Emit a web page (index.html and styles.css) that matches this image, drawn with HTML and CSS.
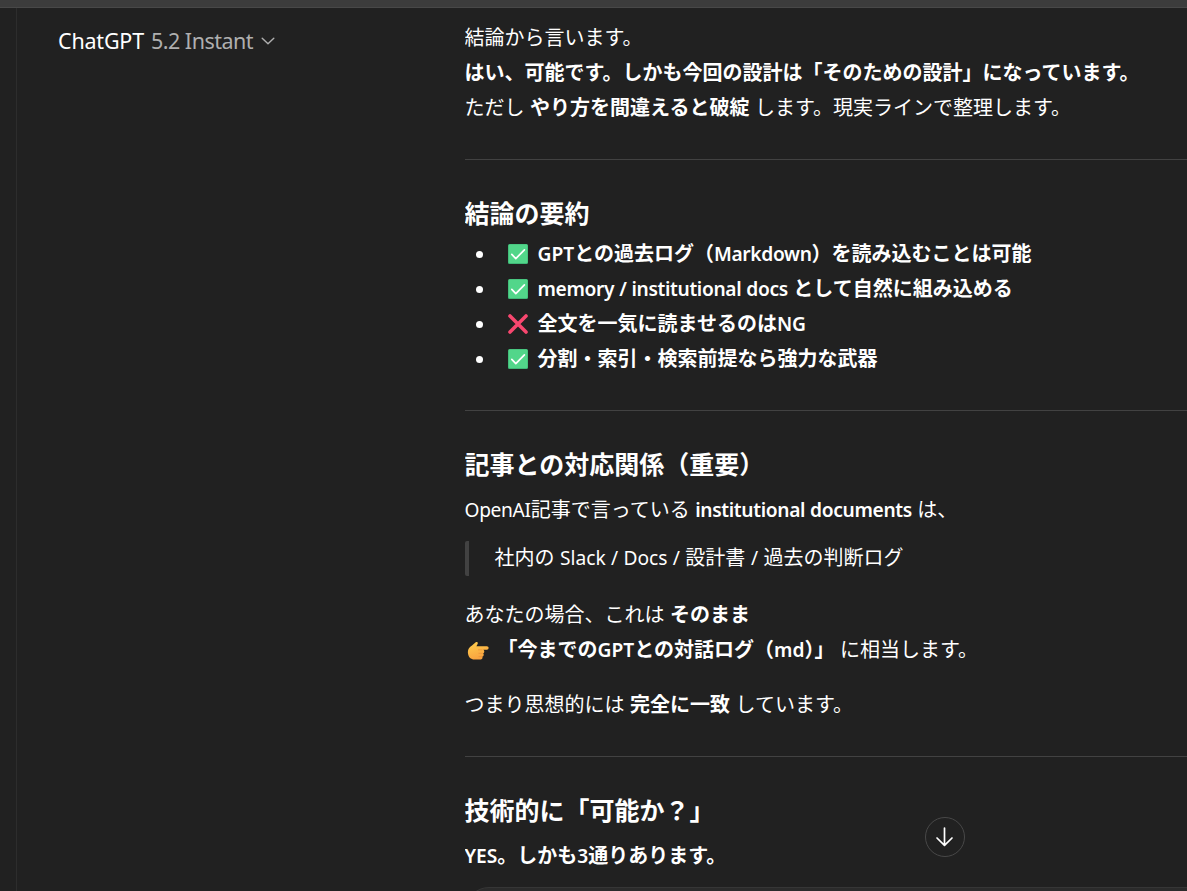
FILE: index.html
```
<!DOCTYPE html>
<html lang="ja">
<head>
    <meta charset="UTF-8">
    <meta name="viewport" content="width=device-width, initial-scale=1.0">
    <title>ChatGPT</title>
    <link rel="stylesheet" href="styles.css">
</head>
<body>
    <!-- shared emoji shapes -->
    <svg class="defs" width="0" height="0">
        <defs>
            <linearGradient id="skin" x1="0" y1="0" x2="0.4" y2="1">
                <stop offset="0" stop-color="#ffd04e"/>
                <stop offset="1" stop-color="#f9a33f"/>
            </linearGradient>
            <symbol id="check" viewBox="0 0 20 20">
                <rect width="20" height="20" rx="1.6" fill="#3fb877"/>
                <rect x="0.8" y="0.4" width="18.6" height="18.6" rx="1.2" fill="#52d68a"/>
                <path d="M3.8 10.4l4 4.2 8.6-8.8" fill="none" stroke="#fff" stroke-width="1.7" stroke-linecap="round" stroke-linejoin="round"/>
            </symbol>
            <symbol id="cross" viewBox="0 0 20 20">
                <path d="M2 2l16 16M18 2L2 18" fill="none" stroke="#f8476f" stroke-width="3.6" stroke-linecap="round"/>
            </symbol>
            <symbol id="point" viewBox="0 0 22 20">
                <path d="M1 12.5C.4 8.8 2 6 5 4.4L8.7 1.3c1.3-1 2.6.2 1.9 1.6L9.4 5.3h10.4c2.4 0 2.4 3.4 0 3.4h-3.5c1.4.6 1.3 3-.2 3.6 1.1.9.6 2.9-.8 3.3.6 1 0 2.9-1.6 2.9H8C4 18.7 1.5 16.5 1 12.5z" fill="url(#skin)"/>
                <path d="M15 8.8h-3.600M15.3 12.3h-3.400M14.8 15.6h-2.800" fill="none" stroke="#e78b35" stroke-width="0.6" stroke-linecap="round"/>
            </symbol>
        </defs>
    </svg>

    <div class="topbar"></div>

    <div class="layout">
        <aside class="rail"></aside>

        <header class="header">
            <span class="brand">ChatGPT</span>
            <span class="model">5.2 Instant</span>
            <svg class="chevron" width="14" height="8" viewBox="0 0 14 8"><path d="M1.2 1.2L7 6.8l5.8-5.6"/></svg>
        </header>

        <main class="message">
            <p>結論から言います。<br>
            <strong>はい、可能です。しかも今回の設計は「そのための設計」になっています。</strong><br>
            ただし <strong>やり方を間違えると破綻</strong> します。現実ラインで整理します。</p>

            <hr>

            <h3>結論の要約</h3>
            <ul>
                <li><svg class="emoji"><use href="#check"/></svg><strong><span class="en">GPT</span>との過去ログ（<span class="en tight">Markdown</span>）を読み込むことは可能</strong></li>
                <li><svg class="emoji"><use href="#check"/></svg><strong><span class="en tight">memory / institutional docs</span> として自然に組み込める</strong></li>
                <li><svg class="emoji"><use href="#cross"/></svg><strong>全文を一気に読ませるのは<span class="en">NG</span></strong></li>
                <li><svg class="emoji"><use href="#check"/></svg><strong>分割・索引・検索前提なら強力な武器</strong></li>
            </ul>

            <hr>

            <h3>記事との対応関係（重要）</h3>
            <p class="after-title"><span class="en tight">OpenAI</span>記事で言っている <strong class="en tight">institutional documents</strong> は、</p>
            <blockquote>社内の <span class="en">Slack / Docs /</span> 設計書 <span class="en">/</span> 過去の判断ログ</blockquote>
            <p>あなたの場合、これは <strong>そのまま</strong><br>
            <svg class="emoji hand"><use href="#point"/></svg><strong>「今までの<span class="en">GPT</span>との対話ログ（<span class="en">md</span>）」</strong> に相当します。</p>
            <p>つまり思想的には <strong>完全に一致</strong> しています。</p>

            <hr>

            <h3>技術的に「可能か？」</h3>
            <p class="after-title"><strong><span class="en">YES</span>。しかも<span class="en">3</span>通りあります。</strong></p>
            <div class="code"></div>
        </main>
    </div>

    <button class="scroll-down" aria-label="下へスクロール">
        <svg width="20" height="22" viewBox="0 0 20 22"><path d="M9.5 2v17M2 12l7.5 7.4L17 12"/></svg>
    </button>
</body>
</html>
```

FILE: styles.css
```
* {
    box-sizing: border-box;
}
body {
    margin: 0;
    height: 891px;
    overflow: hidden;
    background-color: #212121;
    color: #fff;
    font-family: "Noto Sans", "Noto Sans CJK JP", sans-serif;
    font-size: 20px;
    line-height: 35px;
}
.defs {
    position: absolute;
}
.topbar {
    height: 8px;
    background-color: #3c3c3c;
    border-bottom: 1px solid #484848;
}
.layout {
    display: grid;
    grid-template-columns: 17px 447.5px 722.5px;
    height: 883px;
    overflow: hidden;
}
.rail {
    border-right: 1px solid #2d2d2d;
}

/* header */
.header {
    display: flex;
    align-items: center;
    height: 65px;
    padding-left: 41px;
    font-size: 21.5px;
    white-space: nowrap;
}
.brand {
    letter-spacing: -0.2px;
}
.model {
    margin-left: 7px;
    color: #afafaf;
    letter-spacing: -0.5px;
}
.chevron {
    margin-left: 8px;
    fill: none;
    stroke: #afafaf;
    stroke-width: 1.4;
    stroke-linecap: round;
    stroke-linejoin: round;
}

/* message */
.message {
    height: 883px;
    padding-top: 12px;
    overflow: hidden;
    white-space: nowrap;
    word-spacing: 0.3px;
}
p {
    margin: 0 0 20px;
}
strong {
    font-weight: 600;
}
.en {
    font-size: 19.2px;
    line-height: 1;
}
.tight {
    letter-spacing: -0.34px;
}
hr {
    height: 1px;
    margin: 34px 0 33px;
    border: 0;
    background-color: #424242;
}
h3 {
    margin: 0 0 3px;
    font-size: 25px;
    font-weight: 600;
    line-height: 40px;
}
ul {
    margin: 0;
    padding-left: 43px;
    list-style: none;
}
li {
    display: flex;
    align-items: center;
    height: 35px;
    white-space: pre;
}
li::before {
    content: "";
    width: 7px;
    height: 7px;
    margin: 2px 25px 0 -32px;
    border-radius: 50%;
    background-color: #fff;
}
.emoji {
    flex: none;
    width: 20px;
    height: 20px;
    margin-right: 10px;
}
.hand {
    width: 22px;
    margin: 0 9px 0 2px;
    vertical-align: -4px;
}
h3 + .after-title {
    margin: 8px 0 14px;
}
blockquote {
    margin: 0 0 21px;
    padding: 0 0 2px 26px;
    border-left: 4px solid #424242;
    border-radius: 2px;
    line-height: 33px;
}
.code {
    height: 60px;
    margin-right: -60px;
    border: 1px solid #363636;
    border-radius: 24px;
    background-color: #2b2b2b;
}
.scroll-down {
    position: absolute;
    left: 925px;
    top: 817px;
    display: flex;
    align-items: center;
    justify-content: center;
    width: 40px;
    height: 40px;
    padding: 0;
    border: 1px solid #484848;
    border-radius: 50%;
    background-color: #212121;
}
.scroll-down path {
    fill: none;
    stroke: #fff;
    stroke-width: 1.7;
    stroke-linecap: round;
    stroke-linejoin: round;
}
```
